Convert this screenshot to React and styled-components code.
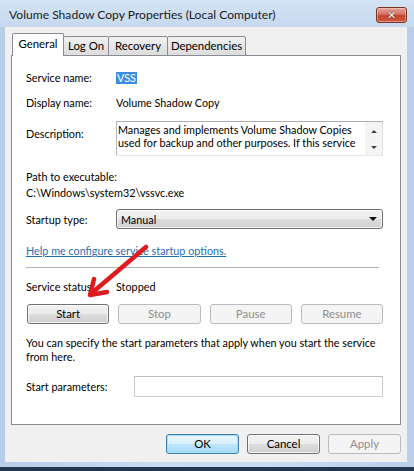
import React from 'react';
import styled, { createGlobalStyle } from 'styled-components';

const Global = createGlobalStyle`
  html, body { margin: 0; padding: 0; background: #fff; }
  body {
    font-family: Lato, "Noto Sans", sans-serif;
    font-size: 10.8px;
    color: #000;
  }
  * { box-sizing: border-box; }
`;

const Window = styled.div`
  position: relative;
  width: 414px;
  height: 471px;
  display: flex;
  flex-direction: column;
  background: linear-gradient(to right, #b7cde8, #c9dcf1 40%, #c6daf0 70%, #b9cfea);
  overflow: hidden;
`;

const TitleBar = styled.div`
  height: 27px;
  display: flex;
  align-items: flex-start;
  justify-content: space-between;
  padding: 0 7px 0 9px;
  background: linear-gradient(#d3e3f4, #c6d9ef);
`;

const Title = styled.div`
  margin-top: 7px;
  line-height: 16px;
  font-size: 12.1px;
  color: #1b1b1b;
  white-space: nowrap;
`;

const CloseButton = styled.div`
  margin-top: 7px;
  width: 31px;
  height: 16px;
  border: 1px solid #7d3025;
  border-radius: 3px;
  background: linear-gradient(#e7a597, #d27462 45%, #c2432d 55%, #c95a40);
  box-shadow: inset 0 0 0 1px rgba(255, 220, 210, 0.45);
  display: flex;
  align-items: center;
  justify-content: center;
  color: #fff;
  font-family: "DejaVu Sans", sans-serif;
  font-weight: bold;
  font-size: 11px;
  line-height: 1;
  text-shadow: 0 0 1px #5a1a10, 0 0 1px #5a1a10;
`;

const Client = styled.div`
  height: 435px;
  margin: 0 7px 0 5px;
  background: #f0f0f0;
  padding: 6px 6px 0 6px;
  display: flex;
  flex-direction: column;
`;

const BottomFrame = styled.div`
  height: 5px;
`;

const Taskbar = styled.div`
  height: 4px;
  background: #223650;
`;

const TabStrip = styled.div`
  display: flex;
  align-items: flex-end;
  margin: 0 0 -1px 1px;
  position: relative;
  z-index: 1;
`;

const Tab = styled.div`
  width: ${(p) => p.$w}px;
  height: ${(p) => (p.$active ? 23 : 20)}px;
  margin-left: ${(p) => (p.$first ? 0 : -1)}px;
  border: 1px solid #898c95;
  border-bottom: ${(p) => (p.$active ? 'none' : '1px solid #898c95')};
  border-radius: 2px 2px 0 0;
  background: ${(p) => (p.$active ? '#fff' : 'linear-gradient(#f2f2f2, #e6e6e6 50%, #dcdcdc)')};
  line-height: ${(p) => (p.$active ? 19 : 17)}px;
  font-size: 11.4px;
  text-align: center;
  white-space: nowrap;
  color: #000;
  position: relative;
  z-index: ${(p) => (p.$active ? 2 : 1)};
`;

const Panel = styled.div`
  height: 370px;
  background: #fff;
  border: 1px solid #898c95;
  padding: 14px 17px 0 14px;
  display: flex;
  flex-direction: column;
`;

const Row = styled.div`
  display: grid;
  grid-template-columns: ${(p) => p.$label || 90}px 1fr;
  align-items: ${(p) => p.$align || 'center'};
  margin-top: ${(p) => p.$mt || 0}px;
  line-height: 15px;
`;

const Label = styled.div`
  padding-top: ${(p) => p.$pt || 0}px;
  white-space: nowrap;
`;

const Line = styled.div`
  margin-top: ${(p) => p.$mt || 0}px;
  line-height: 16px;
  white-space: nowrap;
`;

const Selected = styled.span`
  background: #3d8ee0;
  color: #fff;
  padding: 0 1px;
  line-height: 12px;
  height: 12px;
  display: inline-block;
`;

const DescBox = styled.div`
  height: 35px;
  border: 1px solid #abadb3;
  border-left-color: #b5b8bf;
  border-right-color: #dbdfe6;
  border-bottom-color: #e3e9ef;
  display: flex;
  background: #fff;
`;

const DescText = styled.div`
  flex: 1;
  padding: 1px 0 0 1px;
  line-height: 13px;
  white-space: nowrap;
`;

const ScrollBar = styled.div`
  width: 17px;
  background: #f4f4f4;
  display: flex;
  flex-direction: column;
  justify-content: space-between;
  align-items: center;
  padding: 8px 0 6px;
`;

const ScrollArrow = styled.div`
  width: 0;
  height: 0;
  border-left: 3px solid transparent;
  border-right: 3px solid transparent;
  ${(p) => (p.$up ? 'border-bottom: 3px solid #404040;' : 'border-top: 3px solid #404040;')}
`;

const Combo = styled.div`
  height: 20px;
  border: 1px solid #707070;
  border-radius: 3px;
  background: linear-gradient(#f2f2f2, #ebebeb 50%, #dddddd 50%, #cfcfcf);
  display: flex;
  align-items: center;
  justify-content: space-between;
  padding: 0 5px 0 4px;
  box-shadow: inset 0 0 0 1px rgba(255, 255, 255, 0.7);
`;

const ComboArrow = styled.div`
  width: 0;
  height: 0;
  border-left: 4px solid transparent;
  border-right: 4px solid transparent;
  border-top: 4px solid #111;
`;

const Link = styled.a`
  margin-top: 14px;
  line-height: 15px;
  color: #1f6fae;
  text-decoration: underline;
  align-self: flex-start;
  cursor: pointer;
`;

const Separator = styled.div`
  margin: 9px 4px 0 0;
  height: 1px;
  background: #b4b4b4;
`;

const ButtonRow = styled.div`
  margin: 10px 0 0 1px;
  display: grid;
  grid-template-columns: repeat(4, 1fr);
  gap: 9px;
`;

const Button = styled.div`
  height: 20px;
  width: ${(p) => (p.$w ? `${p.$w}px` : 'auto')};
  border: 1px solid ${(p) => (p.$disabled ? '#b8bcbf' : p.$default ? '#3c7fb1' : '#707070')};
  border-radius: 3px;
  background: ${(p) =>
    p.$disabled
      ? '#f4f4f4'
      : p.$default
      ? 'linear-gradient(#eaf6fd, #d9f0fc 50%, #bee6fd 50%, #a7d9f5)'
      : 'linear-gradient(#f2f2f2, #ebebeb 50%, #dddddd 50%, #cfcfcf)'};
  box-shadow: ${(p) =>
    p.$disabled ? 'none' : p.$default ? 'inset 0 0 0 1px #a9dcf6' : 'inset 0 0 0 1px rgba(255,255,255,0.75)'};
  color: ${(p) => (p.$disabled ? '#8f8f8f' : '#000')};
  display: flex;
  align-items: center;
  justify-content: center;
  font-size: 11.4px;
  line-height: 1;
`;

const Para = styled.div`
  margin-top: 12px;
  line-height: 14px;
  white-space: nowrap;
`;

const Input = styled.div`
  height: 21px;
  border: 1px solid #c9ccd1;
  border-top-color: #b9bcc2;
  background: #fff;
`;

const DialogButtons = styled.div`
  margin-top: 9px;
  display: flex;
  justify-content: flex-end;
  gap: 8px;
`;

const ArrowOverlay = styled.svg`
  position: absolute;
  left: 0;
  top: 0;
  pointer-events: none;
`;

export default function App() {
  return (
    <>
      <Global />
      <Window>
        <TitleBar>
          <Title>Volume Shadow Copy Properties (Local Computer)</Title>
          <CloseButton>✕</CloseButton>
        </TitleBar>
        <Client>
          <TabStrip>
            <Tab $active $first $w={52}>General</Tab>
            <Tab $w={46}>Log On</Tab>
            <Tab $w={60}>Recovery</Tab>
            <Tab $w={79}>Dependencies</Tab>
          </TabStrip>
          <Panel>
            <Row>
              <Label>Service name:</Label>
              <div><Selected>VSS</Selected></div>
            </Row>
            <Row $mt={10}>
              <Label>Display name:</Label>
              <div>Volume Shadow Copy</div>
            </Row>
            <Row $mt={11} $align="start">
              <Label $pt={5}>Description:</Label>
              <DescBox>
                <DescText>
                  Manages and implements Volume Shadow Copies
                  <br />
                  used for backup and other purposes. If this service
                </DescText>
                <ScrollBar>
                  <ScrollArrow $up />
                  <ScrollArrow />
                </ScrollBar>
              </DescBox>
            </Row>
            <Line $mt={13}>Path to executable:</Line>
            <Line>C:\Windows\system32\vssvc.exe</Line>
            <Row $mt={8}>
              <Label>Startup type:</Label>
              <Combo>
                <span>Manual</span>
                <ComboArrow />
              </Combo>
            </Row>
            <Link>Help me configure service startup options.</Link>
            <Separator />
            <Row $mt={11}>
              <Label>Service status:</Label>
              <div>Stopped</div>
            </Row>
            <ButtonRow>
              <Button>Start</Button>
              <Button $disabled>Stop</Button>
              <Button $disabled>Pause</Button>
              <Button $disabled>Resume</Button>
            </ButtonRow>
            <Para>
              You can specify the start parameters that apply when you start the service
              <br />
              from here.
            </Para>
            <Row $mt={12} $label={108}>
              <Label>Start parameters:</Label>
              <Input />
            </Row>
          </Panel>
          <DialogButtons>
            <Button $default $w={73}>OK</Button>
            <Button $w={73}>Cancel</Button>
            <Button $disabled $w={73}>Apply</Button>
          </DialogButtons>
        </Client>
        <BottomFrame />
        <Taskbar />
        <ArrowOverlay width="414" height="471" viewBox="0 0 414 471">
          <g stroke="#de1b1f" strokeWidth="4.5" strokeLinecap="round" strokeLinejoin="round" fill="none">
            <path d="M146 247 L93 292" />
            <path d="M94 279 L90 295 L107 292" />
          </g>
        </ArrowOverlay>
      </Window>
    </>
  );
}
